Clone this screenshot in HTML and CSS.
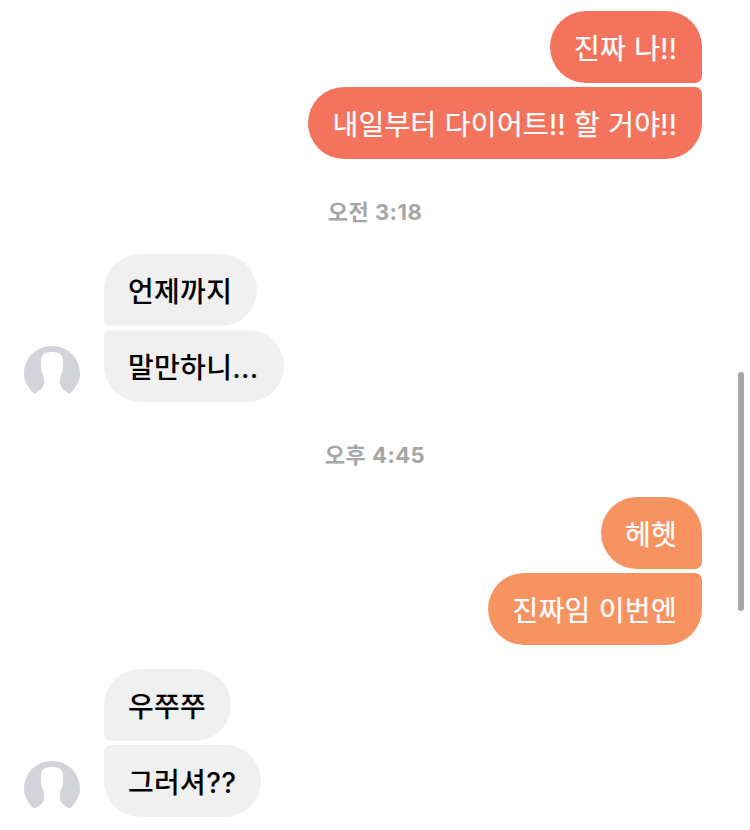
FILE: index.html
```html
<!DOCTYPE html>
<html lang="ko">
<head>
    <meta charset="UTF-8">
    <meta name="viewport" content="width=device-width, initial-scale=1.0">
    <title>채팅</title>
    <link rel="stylesheet" href="styles.css">
</head>
<body>
    <div class="chat">
        <section class="group mine red">
            <p class="bubble">진짜 나!!</p>
            <p class="bubble">내일부터 다이어트!! 할 거야!!</p>
        </section>

        <p class="time">오전 3:18</p>

        <section class="group theirs">
            <svg class="avatar" viewBox="0 0 56 56">
                <path class="avatar-bg" d="M10 47.5 C5 43 0 36 0 28 C0 12 12 0 28 0 C44 0 56 12 56 28 C56 36 51 43 46 47.5 C42 46.5 37.5 43 36 38 C35.5 34 36 30 38 27 L39 24 C38.5 22 39 20 39 17 C39.5 12 38 9 35.5 7.5 C32 5.5 24 5.5 20.5 7.5 C18 9 16.5 12 17 17 C17 20 17.5 22 17 24 L18 27 C20 30 20.5 34 20 38 C18.5 43 14 46.5 10 47.5 Z"/>
            </svg>
            <div class="stack">
                <p class="bubble">언제까지</p>
                <p class="bubble">말만하니...</p>
            </div>
        </section>

        <p class="time">오후 4:45</p>

        <section class="group mine orange">
            <p class="bubble">헤헷</p>
            <p class="bubble">진짜임 이번엔</p>
        </section>

        <section class="group theirs next">
            <svg class="avatar" viewBox="0 0 56 56">
                <path class="avatar-bg" d="M10 47.5 C5 43 0 36 0 28 C0 12 12 0 28 0 C44 0 56 12 56 28 C56 36 51 43 46 47.5 C42 46.5 37.5 43 36 38 C35.5 34 36 30 38 27 L39 24 C38.5 22 39 20 39 17 C39.5 12 38 9 35.5 7.5 C32 5.5 24 5.5 20.5 7.5 C18 9 16.5 12 17 17 C17 20 17.5 22 17 24 L18 27 C20 30 20.5 34 20 38 C18.5 43 14 46.5 10 47.5 Z"/>
            </svg>
            <div class="stack">
                <p class="bubble">우쭈쭈</p>
                <p class="bubble">그러셔??</p>
            </div>
        </section>
    </div>
    <div class="scrollbar"></div>
</body>
</html>
```

FILE: styles.css
```css
html, body {
    margin: 0;
    padding: 0;
    height: 830px;
    overflow: hidden;
    background-color: #ffffff;
}
body {
    font-family: Inter, "Noto Sans CJK KR", sans-serif;
}
.chat {
    padding-top: 11px;
}
.bubble {
    margin: 0;
    height: 72px;
    line-height: 76px;
    padding: 0 25px 0 24px;
    font-size: 28px;
    font-weight: 500;
    letter-spacing: 0.3px;
    border-radius: 36px;
    white-space: nowrap;
    box-sizing: border-box;
}

/* my messages */
.group.mine {
    display: flex;
    flex-direction: column;
    align-items: flex-end;
    gap: 4px;
    padding-right: 48px;
}
.mine .bubble {
    color: #ffffff;
    font-weight: 400;
    -webkit-text-stroke: 0.25px #ffffff;
}
.mine .bubble:first-child {
    border-bottom-right-radius: 7px;
}
.mine .bubble:last-child {
    border-top-right-radius: 7px;
}
.red .bubble {
    background-color: #f4735c;
}
.orange .bubble {
    background-color: #f79361;
}

/* other person */
.group.theirs {
    display: flex;
    align-items: flex-end;
    gap: 24px;
    padding-left: 24px;
}
.group.next {
    margin-top: 24px;
}
.stack {
    display: flex;
    flex-direction: column;
    align-items: flex-start;
    gap: 4px;
}
.theirs .bubble {
    color: #000000;
    background-color: #f0f0f1;
}
.theirs .bubble:first-child {
    border-bottom-left-radius: 7px;
}
.theirs .bubble:last-child {
    border-top-left-radius: 7px;
}
.avatar {
    display: block;
    width: 56px;
    height: 56px;
    flex-shrink: 0;
}
.avatar-bg {
    fill: #d3d4da;
}

.time {
    margin: 40px 0 31px;
    height: 24px;
    line-height: 26px;
    text-align: center;
    font-size: 22px;
    font-weight: 700;
    letter-spacing: 0.5px;
    color: #a6a6a6;
}

.scrollbar {
    position: absolute;
    left: 738px;
    top: 372px;
    width: 6px;
    height: 239px;
    border-radius: 3px;
    background-color: #a5a5a5;
}
```
